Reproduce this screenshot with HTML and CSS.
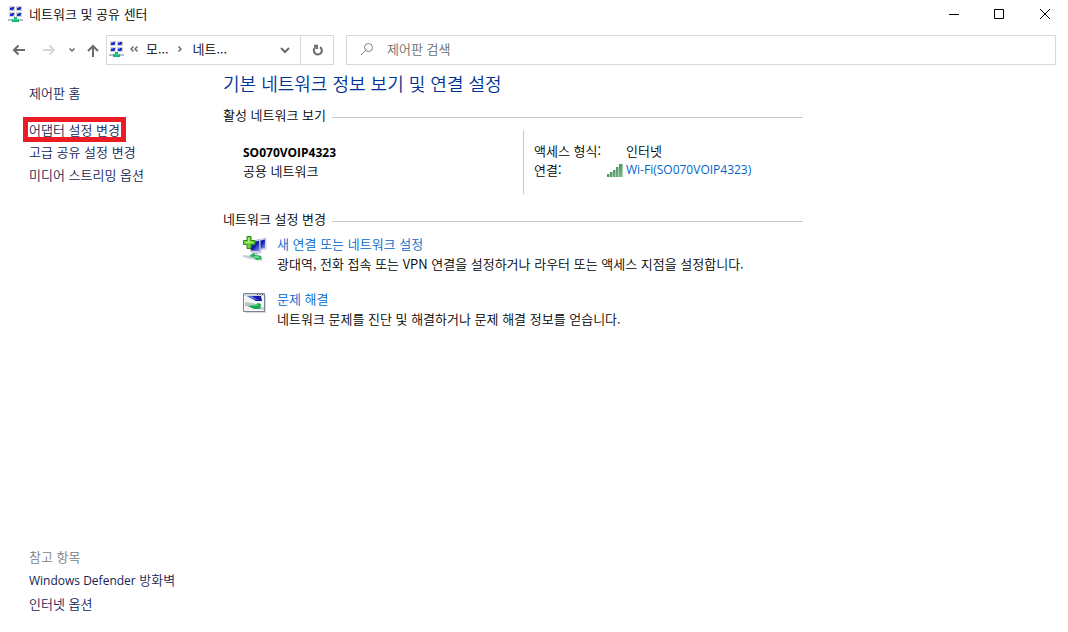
FILE: index.html
```html
<!DOCTYPE html>
<html lang="ko">
<head>
<meta charset="utf-8">
<title>네트워크 및 공유 센터</title>
<meta name="viewport" content="width=device-width, initial-scale=1">
<link rel="stylesheet" href="styles.css">
</head>
<body>
<svg class="defs" aria-hidden="true">
  <defs>
    <linearGradient id="screen" x1="0" y1="0" x2="1" y2="1">
      <stop offset="0" stop-color="#7b8fe8"/><stop offset=".45" stop-color="#0c12a8"/><stop offset="1" stop-color="#8fb0f4"/>
    </linearGradient>
    <linearGradient id="bars" x1="0" y1="0" x2="1" y2="1">
      <stop offset="0" stop-color="#2f6f45"/><stop offset="1" stop-color="#7cc08c"/>
    </linearGradient>
    <symbol id="network" viewBox="0 0 16 16">
      <path d="M1 0h6v5H1zM8 0h6v5H8zM1 6h6v5H1zM8 6h6v5H8z" fill="#cfd2d8"/>
      <path d="M2 1h4v3H2zM9 1h4v3H9zM2 7h4v3H2zM9 7h4v3H9z" fill="#1b2bc0"/>
      <path d="M2 1h2v1H2zM9 1h2v1H9zM2 7h2v1H2zM9 7h2v1H9zM5 3h1v1H5zM12 3h1v1h-1zM5 9h1v1H5zM12 9h1v1h-1z" fill="#7f98ee"/>
      <path d="M0 13h15v2H0z" fill="#b4bcc4"/>
      <path d="M6 11h3v2h2v3H4v-3h2z" fill="#17b878"/>
      <path d="M5 13h5v1H5z" fill="#35dd9b"/>
    </symbol>
  </defs>
</svg>
<div class="window">
  <header class="titlebar">
    <svg class="app-icon" viewBox="0 0 16 16" aria-hidden="true"><use href="#network"/></svg>
    <h1 class="window-title">네트워크 및 공유 센터</h1>
    <div class="window-buttons">
      <button class="window-button" type="button" aria-label="최소화"><svg viewBox="0 0 12 12"><path d="M2 6.500h10"/></svg></button>
      <button class="window-button" type="button" aria-label="최대화"><svg viewBox="0 0 12 12"><path d="M1.500 1.500h9v9h-9z"/></svg></button>
      <button class="window-button" type="button" aria-label="닫기"><svg viewBox="0 0 12 12"><path d="M1 1l10 10M11 1L1 11"/></svg></button>
    </div>
  </header>

  <nav class="toolbar" aria-label="탐색">
    <button class="nav-button" type="button" aria-label="뒤로"><svg class="icon-wide" viewBox="0 0 14 14"><path d="M13 7H2M6.500 2.500L2 7l4.500 4.500"/></svg></button>
    <button class="nav-button nav-forward" type="button" aria-label="앞으로" disabled><svg class="icon-wide" viewBox="0 0 14 14"><path d="M1 7h11M7.500 2.500L12 7l-4.500 4.500"/></svg></button>
    <button class="nav-button nav-recent" type="button" aria-label="최근 위치"><svg class="icon-small" viewBox="0 0 8 8"><path d="M1.500 2.500l2.500 2.500 2.500-2.500"/></svg></button>
    <button class="nav-button nav-up" type="button" aria-label="위로"><svg class="icon-wide" viewBox="0 0 14 14"><path d="M7 14V3M2 8l5-5 5 5"/></svg></button>
    <div class="address">
      <div class="crumbs">
        <svg class="app-icon" viewBox="0 0 16 16" aria-hidden="true"><use href="#network"/></svg>
        <svg class="icon-small crumb-overflow" viewBox="0 0 8 8" aria-hidden="true"><path d="M3.500 1.500l-2.500 2.500 2.500 2.500M7.500 1.500l-2.500 2.500 2.500 2.500"/></svg>
        <a class="crumb" href="#">모...</a>
        <svg class="icon-small crumb-next" viewBox="0 0 8 8" aria-hidden="true"><path d="M2.500 1.500l2.500 2.500-2.500 2.500"/></svg>
        <a class="crumb" href="#">네트...</a>
        <button class="address-drop" type="button" aria-label="이전 위치"><svg viewBox="0 0 12 12"><path d="M2 5l4 4 4-4"/></svg></button>
      </div>
      <button class="refresh" type="button" aria-label="새로 고침"><svg viewBox="0 0 12 12"><path d="M9 3.200A4 4 0 1 1 4.500 3.300M3 1.800H6V5"/></svg></button>
    </div>
    <label class="search">
      <svg viewBox="0 0 14 14" aria-hidden="true"><circle cx="8.500" cy="5.500" r="4"/><path d="M5.500 8.500L1 13"/></svg>
      <input class="search-input" type="text" placeholder="제어판 검색" aria-label="제어판 검색">
    </label>
  </nav>

  <div class="body">
    <aside class="sidebar">
      <a class="side-link side-home" href="#">제어판 홈</a>
      <a class="side-link side-marked" href="#">어댑터 설정 변경</a>
      <a class="side-link" href="#">고급 공유 설정 변경</a>
      <a class="side-link" href="#">미디어 스트리밍 옵션</a>
      <div class="see-also">
        <h2 class="see-also-title">참고 항목</h2>
        <a class="side-link" href="#"><span class="latin">Windows Defender</span> 방화벽</a>
        <a class="side-link" href="#">인터넷 옵션</a>
      </div>
    </aside>

    <main class="content">
      <h2 class="page-title">기본 네트워크 정보 보기 및 연결 설정</h2>

      <section>
        <h3 class="section-title">활성 네트워크 보기</h3>
        <div class="active">
          <div class="network">
            <strong class="latin network-name">SO070VOIP4323</strong>
            <span>공용 네트워크</span>
          </div>
          <dl class="details">
            <dt>액세스 형식:</dt>
            <dd>인터넷</dd>
            <dt>연결:</dt>
            <dd>
              <svg class="signal" viewBox="0 0 16 14" aria-hidden="true">
                <path d="M0 11h3v3H0zM3 9h3v5H3zM6 7h3v7H6zM9 4h3v10H9zM12 1h4v13h-4z" fill="#a9cfb2"/>
                <path d="M0 11h2v3H0zM3 9h2v5H3zM6 7h2v7H6zM9 4h2v10H9zM12 1h3v13h-3z" fill="url(#bars)"/>
              </svg>
              <a class="link latin" href="#">Wi-Fi(SO070VOIP4323)</a>
            </dd>
          </dl>
        </div>
      </section>

      <section>
        <h3 class="section-title">네트워크 설정 변경</h3>
        <div class="task">
          <svg class="task-icon" viewBox="0 0 24 26" aria-hidden="true">
            <path d="M14 4l9-2v11l-8 1z" fill="#dde4f2" stroke="#a9b5cc" stroke-width=".6"/>
            <path d="M15 5l7-1.500v8.500l-6 1z" fill="url(#screen)"/>
            <path d="M5 5l12-1 1 13-10-1z" fill="#d4dcec" stroke="#a0acc4" stroke-width=".6"/>
            <path d="M7 6l9-1 1 10.500-9-1z" fill="url(#screen)"/>
            <path d="M10 16l5 1v2l4 1-5 1-6-2z" fill="#c3cad3"/>
            <path d="M0 19l9 1 11 4-2 1-11-2-7-2z" fill="#c8ced3"/>
            <path d="M6 20l5-3 1 2 6 1 1 3-6 1-1-2z" fill="#1fb45c"/>
            <path d="M10 20l5 0 2 2-4 0z" fill="#63dd8c"/>
            <path d="M4 .500h4v4h4v4H8v4H4v-4H.500v-4H4z" fill="#6fce3c" stroke="#2d8a12"/>
            <path d="M5 2h1.500v4H10v1H2V6h3z" fill="#b3ee82"/>
          </svg>
          <div class="task-text">
            <a class="link" href="#">새 연결 또는 네트워크 설정</a>
            <p>광대역, 전화 접속 또는 VPN 연결을 설정하거나 라우터 또는 액세스 지점을 설정합니다.</p>
          </div>
        </div>
        <div class="task">
          <svg class="task-icon" viewBox="0 0 24 26" aria-hidden="true">
            <path d="M2 4h21v18H2z" fill="#d9d9d9"/>
            <path d="M.500 2.500h21v18H.500z" fill="#f3f5f7" stroke="#7d848c"/>
            <path d="M1 3h20v2H1z" fill="#cfd5dc"/>
            <path d="M14 3.500h1M16.500 3.500h1M19 3.500h1" stroke="#39424d"/>
            <path d="M4 5h14l1 5-6 0z" fill="#1519a8"/>
            <path d="M4 5h5l6 4-5-1z" fill="#6378dc"/>
            <path d="M2 11l8 1 11 5v2l-10-2-9-2z" fill="#bcc6cb"/>
            <path d="M5 15l7-1 3-2 3 1-1 5-6 0z" fill="#18a851"/>
            <path d="M9 14l4-1 3 1-4 1z" fill="#5fdb87"/>
          </svg>
          <div class="task-text">
            <a class="link" href="#">문제 해결</a>
            <p>네트워크 문제를 진단 및 해결하거나 문제 해결 정보를 얻습니다.</p>
          </div>
        </div>
      </section>
    </main>
  </div>
</div>
</body>
</html>
```
FILE: styles.css
```css
* { box-sizing: border-box; }

body {
  margin: 0;
  background: #fff;
  color: #000;
  font: 350 13px/20px "Noto Sans CJK KR", "Noto Sans", sans-serif;
}

h1, h2, h3, p, dl, dd { margin: 0; font-weight: inherit; }
a { color: inherit; text-decoration: none; }
a:hover { text-decoration: underline; }
button {
  display: flex;
  align-items: center;
  justify-content: center;
  padding: 0;
  border: 0;
  background: none;
  color: inherit;
}
svg { display: block; flex: none; }
.defs { position: absolute; width: 0; height: 0; }
.latin { font-family: "Open Sans", "Noto Sans", sans-serif; font-size: 12px; font-weight: 400; }

.window { display: flex; flex-direction: column; min-height: 100vh; }

.titlebar { display: flex; align-items: center; height: 28px; padding-left: 8px; }
.app-icon { width: 16px; height: 16px; }
.window-title { flex: 1; margin-left: 5px; font-size: 13px; }
.window-buttons { display: flex; }
.window-button { width: 46px; height: 28px; }
.window-button svg { width: 12px; height: 12px; fill: none; stroke: #000; }

.toolbar { display: flex; align-items: center; margin-top: 7px; padding: 0 12px; color: #6b6b6b; }
.nav-button svg, .crumbs > .icon-small, .address-drop svg, .refresh svg {
  fill: none;
  stroke: currentColor;
  stroke-width: 2;
}
.icon-wide { width: 14px; height: 14px; }
.icon-small { width: 8px; height: 8px; }
.nav-button .icon-small, .crumbs > .icon-small { stroke-width: 1.5; }
.nav-forward { margin-left: 16px; color: #d6d6d6; }
.nav-recent { margin-left: 12px; }
.nav-up { margin: 0 6px 0 10px; }
.address { display: flex; width: 228px; height: 30px; border: 1px solid #d9d9d9; }
.crumbs { display: flex; flex: 1; align-items: center; padding: 0 0 2px 2px; }
.crumb { color: #000; }
.crumb-overflow { margin: 0 8px 0 5px; }
.crumb-next { margin: 0 9px 0 7px; }
.address-drop { margin: 0 9px 0 auto; }
.address-drop svg, .refresh svg { width: 12px; height: 12px; }
.refresh { width: 33px; border-left: 1px solid #d9d9d9; }
.search {
  display: flex;
  flex: 1;
  align-items: center;
  height: 30px;
  margin-left: 12px;
  padding: 0 0 2px 13px;
  border: 1px solid #d9d9d9;
}
.search svg { width: 14px; height: 14px; fill: none; stroke: #808080; }
.search-input {
  flex: 1;
  min-width: 0;
  margin-left: 13px;
  padding: 0;
  border: 0;
  outline: 0;
  background: none;
  font: inherit;
}
.search-input::placeholder { color: #6d6d6d; opacity: 1; }

.body { display: flex; flex: 1; }

.sidebar {
  display: flex;
  flex-direction: column;
  align-items: flex-start;
  gap: 8px;
  width: 223px;
  padding: 20px 16px 21px 28px;
  line-height: 15px;
}
.side-link { padding: 0 1px; color: #151c55; }
.side-home { margin-bottom: 14px; }
.side-marked { margin-bottom: -1px; outline: 5px solid #ed1c24; }
.see-also {
  display: flex;
  flex-direction: column;
  align-items: flex-start;
  gap: 8px;
  margin-top: auto;
}
.see-also-title { padding: 0 1px; color: #808080; font-size: 13px; }

.content { flex: 0 1 580px; padding-top: 6px; }
.page-title { color: #003399; font-size: 18px; line-height: 24px; }
.section-title {
  display: flex;
  align-items: center;
  gap: 6px;
  margin-top: 10px;
  font-size: 13px;
  line-height: 20px;
}
.section-title::after { content: ""; flex: 1; height: 1px; margin-top: 5px; background: #c8c8c8; }
.active { display: flex; margin: 5px 0 15px; padding-left: 20px; }
.network { display: flex; flex: 1; flex-direction: column; padding-top: 14px; line-height: 18px; }
.network-name { font-weight: 700; }
.details {
  display: grid;
  flex: none;
  grid-template-columns: 92px 177px;
  align-content: start;
  min-height: 64px;
  padding: 11px 0 0 10px;
  border-left: 1px solid #c8c8c8;
  line-height: 19px;
}
.details dd { display: flex; align-items: center; }
.signal { width: 16px; height: 14px; margin: 0 3px 0 -19px; }
.link { color: #0066cc; }

.task { display: flex; gap: 10px; margin-bottom: 10px; padding: 5px 0 0 20px; }
.task-icon { width: 24px; height: 26px; margin-top: 2px; }
.task-text { display: flex; flex-direction: column; align-items: flex-start; }
```
